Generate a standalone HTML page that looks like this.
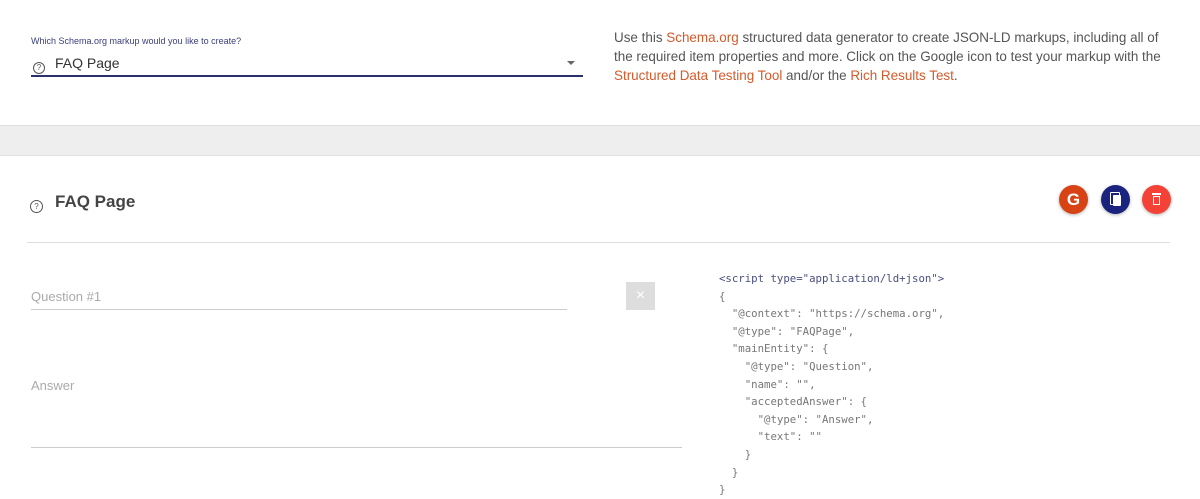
<!DOCTYPE html>
<html><head><meta charset="utf-8"><style>
body{margin:0;width:1200px;height:499px;overflow:hidden;background:#fff;font-family:"Liberation Sans",sans-serif;position:relative}
.a{position:absolute;white-space:nowrap}
.o{color:#d35b2c}
.code{position:absolute;left:719px;top:270px;font-family:"DejaVu Sans Mono",monospace;font-size:10.7px;line-height:17.6px;color:#777;white-space:pre}
.q{display:inline-block;width:10px;height:10px;border:1.2px solid #555;border-radius:50%;font-size:8px;line-height:10px;text-align:center;color:#555}
.btn{position:absolute;top:185px;width:29px;height:29px;border-radius:50%;box-shadow:0 1px 3px rgba(0,0,0,.3)}
</style></head><body>
<div class="a" style="left:31px;top:36px;font-size:9px;color:#3a3f7a">Which Schema.org markup would you like to create?</div>
<div class="a" style="left:33px;top:57px;"><span class="q">?</span></div>
<div class="a" style="left:55px;top:55px;font-size:14px;color:#333">FAQ Page</div>
<div class="a" style="left:567px;top:61px;width:0;height:0;border-left:4px solid transparent;border-right:4px solid transparent;border-top:4px solid #666"></div>
<div class="a" style="left:31px;top:75px;width:552px;height:2px;background:#2b2f6b"></div>
<div class="a" style="left:614px;top:28px;font-size:13.45px;line-height:19px;color:#555">Use this <span class="o">Schema.org</span> structured data generator to create JSON-LD markups, including all of<br>the required item properties and more. Click on the Google icon to test your markup with the<br><span class="o">Structured Data Testing Tool</span> and/or the <span class="o">Rich Results Test</span>.</div>
<div class="a" style="left:0;top:125px;width:1200px;height:29px;background:#eee;border-top:1px solid #e0e0e0;border-bottom:1px solid #e0e0e0"></div>
<div class="a" style="left:30px;top:196px"><span class="q" style="width:11px;height:11px;line-height:11px">?</span></div>
<div class="a" style="left:55px;top:192px;font-size:17px;font-weight:bold;color:#444">FAQ Page</div>
<div class="btn" style="left:1059px;background:#d84315;color:#fff;font-weight:bold;font-size:17px;text-align:center;line-height:29px">G</div>
<div class="btn" style="left:1101px;background:#1a237e"><div style="position:absolute;left:9px;top:7px;width:8px;height:11px;border:1.5px solid #fff;border-radius:1px"></div><div style="position:absolute;left:12px;top:10px;width:8px;height:11px;background:#fff;border-radius:1px"></div></div>
<div class="btn" style="left:1142px;background:#f44336"><div style="position:absolute;left:10px;top:8px;width:9px;height:2px;background:#fff"></div><div style="position:absolute;left:11px;top:11px;width:7px;height:9px;border:1.5px solid #fff;box-sizing:border-box"></div></div>
<div class="a" style="left:27px;top:242px;width:1143px;height:1px;background:#ddd"></div>
<div class="a" style="left:31px;top:289px;font-size:13px;color:#aaa">Question #1</div>
<div class="a" style="left:31px;top:309px;width:536px;height:1px;background:#ccc"></div>
<div class="a" style="left:626px;top:282px;width:29px;height:28px;background:#ddd;color:#fff;text-align:center;line-height:28px;font-size:16px">×</div>
<div class="a" style="left:31px;top:378px;font-size:13px;color:#aaa">Answer</div>
<div class="a" style="left:31px;top:447px;width:651px;height:1px;background:#ccc"></div>
<div class="code"><span style="color:#4a4f80">&lt;script type="application/ld+json"&gt;</span>
{
  "@context": "https://schema.org",
  "@type": "FAQPage",
  "mainEntity": {
    "@type": "Question",
    "name": "",
    "acceptedAnswer": {
      "@type": "Answer",
      "text": ""
    }
  }
}</div>
</body></html>
